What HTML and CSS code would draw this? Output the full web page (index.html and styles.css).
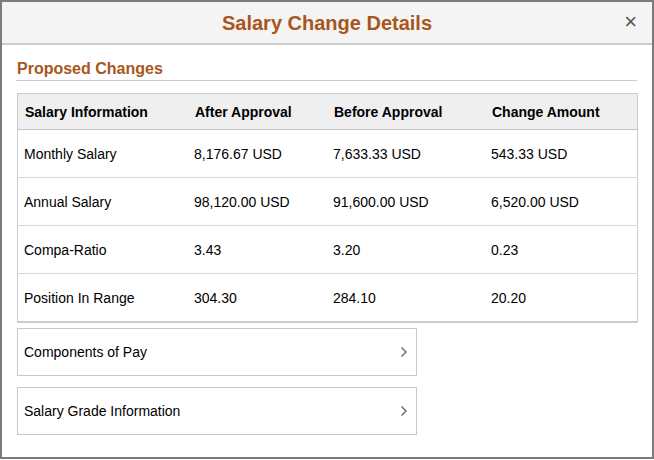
FILE: index.html
```html
<!DOCTYPE html>
<html lang="en">
<head>
  <meta charset="UTF-8" />
  <title>Salary Change Details</title>
  <link rel="stylesheet" href="styles.css">
</head>
<body>

<div class="dialog">
  <header class="dialog-header">
    <h1>Salary Change Details</h1>
    <span class="close-icon">&times;</span>
  </header>

  <div class="dialog-body">
    <h2>Proposed Changes</h2>

    <table class="salary-table">
      <thead>
        <tr>
          <th class="col1">Salary Information</th>
          <th class="col2">After Approval</th>
          <th class="col3">Before Approval</th>
          <th>Change Amount</th>
        </tr>
      </thead>
      <tbody>
        <tr>
          <td>Monthly Salary</td>
          <td>8,176.67 USD</td>
          <td>7,633.33 USD</td>
          <td>543.33 USD</td>
        </tr>
        <tr>
          <td>Annual Salary</td>
          <td>98,120.00 USD</td>
          <td>91,600.00 USD</td>
          <td>6,520.00 USD</td>
        </tr>
        <tr>
          <td>Compa-Ratio</td>
          <td>3.43</td>
          <td>3.20</td>
          <td>0.23</td>
        </tr>
        <tr>
          <td>Position In Range</td>
          <td>304.30</td>
          <td>284.10</td>
          <td>20.20</td>
        </tr>
      </tbody>
    </table>

    <a class="link-row" href="#">
      <span>Components of Pay</span>
      <svg width="8" height="12" viewBox="0 0 8 12"><path d="M1.5 1.5 L6 6 L1.5 10.5" fill="none" stroke="#666" stroke-width="1.4"/></svg>
    </a>
    <a class="link-row" href="#">
      <span>Salary Grade Information</span>
      <svg width="8" height="12" viewBox="0 0 8 12"><path d="M1.5 1.5 L6 6 L1.5 10.5" fill="none" stroke="#666" stroke-width="1.4"/></svg>
    </a>
  </div>
</div>

</body>
</html>
```
FILE: styles.css
```css
body {
  margin: 0;
  font-family: 'Liberation Sans', Arial, sans-serif;
  background-color: #fff;
  color: #000;
}
.dialog {
  width: 654px;
  height: 459px;
  box-sizing: border-box;
  border: 2px solid #7b7b7b;
  background-color: #fff;
}
.dialog-header {
  height: 41px;
  background-color: #f4f4f4;
  border-bottom: 2px solid #cbcbcb;
  display: flex;
  align-items: center;
  justify-content: center;
  position: relative;
}
.dialog-header h1 {
  margin: 2px 0 0 0;
  font-size: 20px;
  font-weight: bold;
  color: #a9561c;
}
.close-icon {
  position: absolute;
  right: 15px;
  top: 9px;
  font-size: 22px;
  color: #555;
  line-height: 22px;
}
.dialog-body {
  padding: 15px 15px 0 15px;
}
.dialog-body h2 {
  margin: 0 0 0 -1px;
  font-size: 16px;
  font-weight: bold;
  color: #a9561c;
  padding: 0 0 2px 1px;
  border-bottom: 1px solid #cccccc;
}
.salary-table {
  margin-top: 12px;
  width: 621px;
  border-collapse: collapse;
  border: 1px solid #cccccc;
  border-bottom: 2px solid #cccccc;
  font-size: 14px;
}
.salary-table th {
  background-color: #efefef;
  text-align: left;
  font-weight: bold;
  height: 35px;
  padding: 0 0 0 7px;
  border-bottom: 1px solid #c4c4c4;
}
.salary-table td {
  height: 47px;
  padding: 0 0 0 6px;
  border-bottom: 1px solid #d6d6d6;
}
.salary-table tr:last-child td {
  border-bottom: none;
}
.salary-table .col1 {
  width: 163px;
}
.salary-table .col2 {
  width: 132px;
}
.salary-table .col3 {
  width: 151px;
}
.link-row {
  display: flex;
  align-items: center;
  justify-content: space-between;
  width: 400px;
  height: 48px;
  box-sizing: border-box;
  border: 1px solid #c8c8c8;
  padding: 0 8px 0 6px;
  margin-top: 5px;
  margin-bottom: 11px;
  color: #000;
  text-decoration: none;
  font-size: 14px;
}
.link-row + .link-row {
  margin-top: 0;
}
```
